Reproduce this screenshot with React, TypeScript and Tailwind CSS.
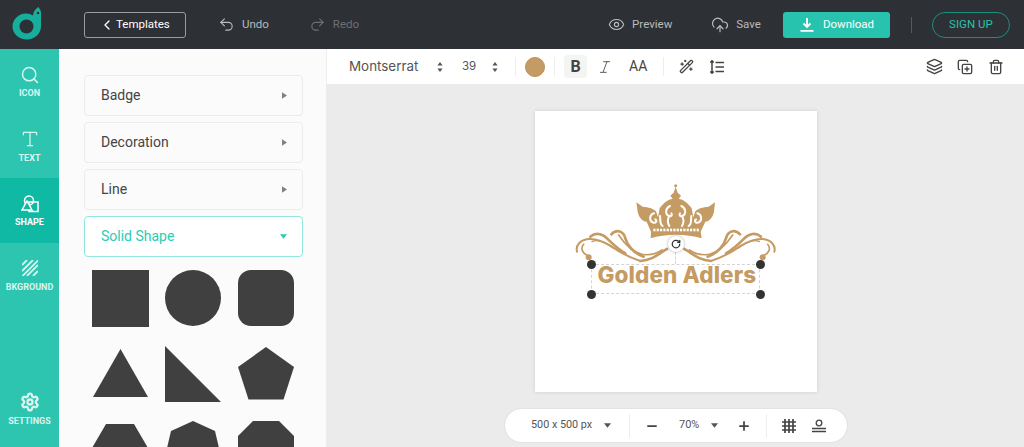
import React from "react";
import { ChevronLeft, Undo2, Redo2, Eye, CloudUpload, Search, Type, Settings, Italic, WandSparkles, Layers, CopyPlus, Trash2, Minus, Plus, RotateCw } from "lucide-react";

const Caret = ({ className = "" }: { className?: string }) => (
  <svg viewBox="0 0 8 8" className={className} fill="currentColor"><path d="M0 1.5h8L4 6.5z" /></svg>
);
const RightCaret = () => (
  <svg viewBox="0 0 6 8" className="w-[5px] h-[7px] text-[#808080]" fill="currentColor"><path d="M0 0l6 4-6 4z" /></svg>
);
const UpDown = () => (
  <svg viewBox="0 0 6 12" className="w-[6px] h-[12px] text-[#555]" fill="currentColor"><path d="M3 1l2.6 3.4H.4zM3 11L.4 7.6h5.2z" /></svg>
);

const Logo = () => (
  <svg viewBox="0 0 30 33" className="w-[30px] h-[33px]">
    <path fill="#18ae9d" d="M14 6.5C16.800 6.500 19 7.200 21 8.500L21.500 6C22 3.500 24 1.500 26.500 0C27.500 1.800 28.800 3 29 5.500L29 19C29 27 22.500 32.500 14.800 32.500C7 32.500 .5 26.500 .5 19.500C.5 12.500 6.500 6.500 14 6.500Z" />
    <circle cx="14.500" cy="19.500" r="7" fill="#2d3035" />
    <circle cx="26" cy="6" r="1.300" fill="#2d3035" />
  </svg>
);

const SideItem = ({ icon, label, active, className = "" }: { icon: React.ReactNode; label: string; active?: boolean; className?: string }) => (
  <div className={`h-[64.500px] flex flex-col items-center pt-[16px] ${active ? "bg-[#0fb9a3] text-white" : "text-[#d9f5f0]"} ${className}`}>
    <div className="h-[19px] flex items-center justify-center">{icon}</div>
    <div className="mt-[3px] text-[9px] leading-[12px] font-bold">{label}</div>
  </div>
);

const Row = ({ label }: { label: string }) => (
  <div className="h-[41px] rounded-[4px] border border-[#ececec] bg-[#fbfbfb] flex items-center justify-between pl-[16px] pr-[15px] text-[14px] text-[#444]">
    <span>{label}</span>
    <RightCaret />
  </div>
);

const Ornament = () => (
  <g fill="none" stroke="#c59b64" strokeLinecap="round" transform="translate(21 150)">
    <path strokeWidth="6" d="M15 80C10 60 25 45 50 42C75 40 95 50 115 62C140 80 165 95 205 108" />
    <path strokeWidth="5" d="M48 92C30 85 25 70 35 58" />
    <path strokeWidth="8" d="M55 35C70 22 90 25 105 40C120 55 135 70 160 85" />
    <path strokeWidth="8" d="M118 28C135 10 155 20 160 40C165 60 185 85 215 95" />
    <path strokeWidth="8" d="M285 72C260 85 245 105 205 108" />
    <path strokeWidth="5" d="M140 30C150 45 175 80 210 88C235 92 255 85 270 75" />
    <path strokeWidth="4" d="M60 50C80 40 100 55 125 70" />
    <circle cx="50" cy="97" r="9" fill="#c59b64" stroke="none" />
  </g>
);

const CrownCuts = () => (
  <g fill="none" stroke="#fff" strokeWidth="6" strokeLinecap="round">
    <path d="M120 78C106 84 104 104 118 108C124 110 128 104 124 100" />
    <path d="M118 108C112 118 112 128 118 138" />
    <path d="M72 100C58 104 56 122 70 128C78 130 82 122 76 118" />
    <path d="M90 108C92 122 88 132 98 138" />
  </g>
);

const Crown = () => {
  const dots = Array.from({ length: 14 }, (_, i) => 70 + i * 10);
  return (
    <svg viewBox="0 0 660 390" className="absolute left-[30px] top-[64px] w-[220px] h-[130px]">
      <g transform="translate(195 15)">
        <circle cx="137" cy="17" r="4.500" fill="#c59b64" />
        <path fill="#c59b64" d="M137 20L143 38L153 47L146 56C160 58 175 70 185 85L190 112L196 94C205 84 218 82 236 80L255 67L252 95C248 115 235 125 226 125L212 155L215 175C170 161 105 161 62 175L63 155L50 125C40 125 27 115 23 95L19 67L38 80C56 82 69 84 78 94L84 112L89 85C99 70 114 58 128 56L121 47L131 38Z" />
        <CrownCuts />
        <g transform="translate(274 0) scale(-1 1)"><CrownCuts /></g>
        {dots.map((x) => <rect key={x} x={x} y="146" width="6.500" height="8" fill="#fff" />)}
      </g>
      <Ornament />
      <g transform="translate(664 0) scale(-1 1)"><Ornament /></g>
    </svg>
  );
};

const Handle = ({ className }: { className: string }) => (
  <div className={`absolute w-[9px] h-[9px] rounded-full bg-[#333] ${className}`} />
);

const shape = "fill-[#404040] w-[56px] h-[56px] overflow-visible";

export default function App() {
  return (
    <div className="w-[1024px] h-[447px] overflow-hidden flex flex-col font-['Roboto',sans-serif]">
      <header className="h-[49px] shrink-0 bg-[#2d3035] flex items-center text-[11.500px]">
        <div className="ml-[12px] mb-[2px]"><Logo /></div>
        <button className="ml-[42px] w-[102px] h-[26px] rounded-[3px] border border-[#9a9da0] flex items-center pl-[15px] text-white gap-[1px]">
          <ChevronLeft size={16} strokeWidth={2} className="-ml-[1px]" />
          <span>Templates</span>
        </button>
        <div className="ml-[32px] flex items-center gap-[7px] text-[#b9bbbd]"><Undo2 size={17} strokeWidth={1.6} /><span>Undo</span></div>
        <div className="ml-[40px] flex items-center gap-[7px] text-[#6d7073]"><Redo2 size={17} strokeWidth={1.6} /><span>Redo</span></div>
        <div className="ml-[249px] flex items-center gap-[7px] text-[#b9bbbd]"><Eye size={17} strokeWidth={1.6} /><span>Preview</span></div>
        <div className="ml-[39px] flex items-center gap-[7px] text-[#b9bbbd]"><CloudUpload size={18} strokeWidth={1.6} /><span>Save</span></div>
        <button className="ml-[22px] w-[107px] h-[26px] rounded-[3px] bg-[#28c3ae] text-white flex items-center pl-[17px] gap-[9px]">
          <svg viewBox="0 0 14 14" className="w-[14px] h-[14px]" fill="none" stroke="currentColor" strokeWidth="1.800"><path d="M7 0v8.500M3.500 5.500L7 9l3.500-3.500M.5 12.800h13" /></svg>
          <span>Download</span>
        </button>
        <div className="ml-[21px] w-px h-[16px] bg-[#55585c]" />
        <button className="ml-[20px] w-[78px] h-[26px] rounded-full border border-[#1d8d80] text-[#28c3ae] flex items-center justify-center">SIGN UP</button>
      </header>

      <div className="flex-1 min-h-0 flex">
        <aside className="w-[59px] shrink-0 bg-[#2dc5b0] flex flex-col font-bold">
          <SideItem icon={<Search size={20} strokeWidth={1.8} />} label="ICON" />
          <SideItem icon={<Type size={20} strokeWidth={1.5} />} label="TEXT" />
          <SideItem active label="SHAPE" icon={
            <svg viewBox="0 0 18 18" className="w-[18px] h-[18px]" fill="none" stroke="currentColor" strokeWidth="1.500"><circle cx="8" cy="5.500" r="4.500" /><rect x="8" y="7" width="9" height="9.500" /><path d="M6 6L11 15H1z" fill="#0fb9a3" /></svg>
          } />
          <SideItem label="BKGROUND" icon={
            <svg viewBox="0 0 16 16" className="w-[16px] h-[16px]" stroke="currentColor" strokeWidth="1.800"><path d="M0 5L5 0M0 11L11 0M0 16.500L16.500 0M5 16L16 5M11 16L16 11" /></svg>
          } />
          <div className="flex-1" />
          <SideItem className="mb-[6px]" icon={<Settings size={20} strokeWidth={2.8} />} label="SETTINGS" />
        </aside>

        <section className="w-[268px] shrink-0 bg-[#fbfbfb] border-r border-[#eeeeee] pl-[25px] pr-[23px] pt-[26px]">
          <div className="flex flex-col gap-[6px]">
            <Row label="Badge" />
            <Row label="Decoration" />
            <Row label="Line" />
            <div className="h-[41px] rounded-[4px] border border-[#8fe6da] bg-white flex items-center justify-between pl-[16px] pr-[15px] text-[14px] text-[#2dcab4]">
              <span>Solid Shape</span>
              <Caret className="w-[7px] h-[7px]" />
            </div>
          </div>
          <div className="mt-[13px] ml-[8px] grid grid-cols-[56px_56px_56px] gap-x-[17px] gap-y-[19px]">
            <div className="w-[57px] h-[57px] bg-[#404040]" />
            <div className="w-[56px] h-[56px] rounded-full bg-[#404040]" />
            <div className="w-[56px] h-[56px] rounded-[13px] bg-[#404040]" />
            <svg viewBox="0 0 56 56" className={shape}><path d="M28.500 3L56 51H1z" /></svg>
            <svg viewBox="0 0 56 56" className={shape}><path d="M0 0L56 56H0z" /></svg>
            <svg viewBox="0 0 56 56" className={shape}><path d="M28 1L56 21L45.500 53.500H10.500L0 21z" /></svg>
            <svg viewBox="0 0 56 56" className={shape}><path d="M14 3H42L56 27H0z" /></svg>
            <svg viewBox="0 0 56 56" className={shape}><path d="M28 0L50 10L54 27H2L6 10z" /></svg>
            <svg viewBox="0 0 56 56" className={shape}><path d="M15 0H41L56 15V56H0V15z" /></svg>
          </div>
        </section>

        <main className="flex-1 min-w-0 flex flex-col relative">
          <div className="h-[35px] shrink-0 bg-white flex items-center text-[#555]">
            <span className="ml-[22px] w-[70px] font-['Inter',sans-serif] text-[13.400px] text-[#555] whitespace-nowrap">Montserrat</span>
            <div className="ml-[18px]"><UpDown /></div>
            <span className="ml-[19px] w-[16px] text-[11.500px] font-['Inter',sans-serif]">39</span>
            <div className="ml-[14px]"><UpDown /></div>
            <div className="ml-[17px] w-px h-[19px] bg-[#eeeeee]" />
            <div className="ml-[9px] w-[20px] h-[20px] rounded-full bg-[#c59b64] border border-[#b8905c]" />
            <div className="ml-[9px] w-px h-[19px] bg-[#eeeeee]" />
            <div className="ml-[9px] w-[23px] h-[23px] rounded-[4px] bg-[#f4f4f2] flex items-center justify-center text-[16px] font-bold text-[#444]">B</div>
            <Italic size={16} strokeWidth={1.4} className="ml-[10px] text-[#555]" />
            <span className="ml-[16px] w-[18px] text-[14px] text-[#444]">AA</span>
            <div className="ml-[16px] w-px h-[19px] bg-[#eeeeee]" />
            <WandSparkles size={15} strokeWidth={2} className="ml-[15px] text-[#444]" />
            <svg viewBox="0 0 14 14" className="ml-[16px] w-[14px] h-[14px] text-[#444]" fill="none" stroke="currentColor" strokeWidth="1.500"><path d="M5.500 2.500h8.500M5.500 7h8.500M5.500 11.500h8.500M2 .5v13M.3 2.500L2 .7l1.700 1.800M.3 11.500L2 13.300l1.700-1.800" /></svg>
            <div className="flex-1" />
            <Layers size={17} strokeWidth={2} className="text-[#444]" />
            <CopyPlus size={16} strokeWidth={2} className="ml-[14px] text-[#444]" />
            <Trash2 size={16} strokeWidth={2} className="ml-[15px] mr-[20px] text-[#444]" />
          </div>
          <div className="flex-1 min-h-0 bg-[#ebebeb] flex justify-center items-start pt-[27px]">
            <div className="relative w-[282px] h-[281px] bg-white shadow-[0_0_4px_rgba(0,0,0,0.12)]">
              <Crown />
              <div className="absolute left-[56px] top-[153px] w-[169px] h-[30px] border border-dashed border-[#d4d4d4]" />
              <div className="absolute left-[140.500px] top-[141px] h-[12px] border-l border-dashed border-[#d4d4d4]" />
              <div className="absolute left-[63px] top-[150px] text-[22.500px] tracking-[0.1px] leading-[28px] font-extrabold font-['Inter',sans-serif] text-[#c59b64] whitespace-nowrap">Golden Adlers</div>
              <Handle className="left-[52px] top-[149px]" />
              <Handle className="left-[221px] top-[149px]" />
              <Handle className="left-[52px] top-[179px]" />
              <Handle className="left-[221px] top-[179px]" />
              <div className="absolute left-[133px] top-[125px] w-[16px] h-[16px] rounded-full bg-white shadow-[0_0_3px_rgba(0,0,0,0.35)] flex items-center justify-center text-[#333]"><RotateCw size={10} strokeWidth={3} /></div>
            </div>
          </div>
          <div className="absolute left-[178px] top-[360px] w-[342px] h-[33px] rounded-full bg-white shadow-[0_0_2px_rgba(0,0,0,0.12)] flex items-center text-[11px] text-[#555]">
            <span className="ml-[26px] w-[60px] text-[10.800px] whitespace-nowrap">500 x 500 px</span>
            <Caret className="ml-[13px] w-[7px] h-[7px] text-[#555]" />
            <div className="ml-[18px] w-px h-[24px] bg-[#eeeeee]" />
            <Minus size={14} strokeWidth={3} className="ml-[15px] text-[#444]" />
            <span className="ml-[20px] w-[20px]">70%</span>
            <Caret className="ml-[12px] w-[7px] h-[7px] text-[#555]" />
            <Plus size={14} strokeWidth={3} className="ml-[19px] text-[#444]" />
            <div className="ml-[15px] w-px h-[24px] bg-[#eeeeee]" />
            <svg viewBox="0 0 14 14" className="ml-[15px] w-[14px] h-[14px] text-[#444]" fill="none" stroke="currentColor" strokeWidth="1.700"><path d="M3 0V14M7 0V14M11 0V14M0 3H14M0 7H14M0 11H14" /></svg>
            <svg viewBox="0 0 14 14" className="ml-[16px] w-[14px] h-[14px] text-[#444]" fill="none" stroke="currentColor" strokeWidth="1.300"><circle cx="7" cy="4" r="2.800" /><path d="M0 9.500h14M0 12.500h14" /></svg>
          </div>
        </main>
      </div>
    </div>
  );
}
